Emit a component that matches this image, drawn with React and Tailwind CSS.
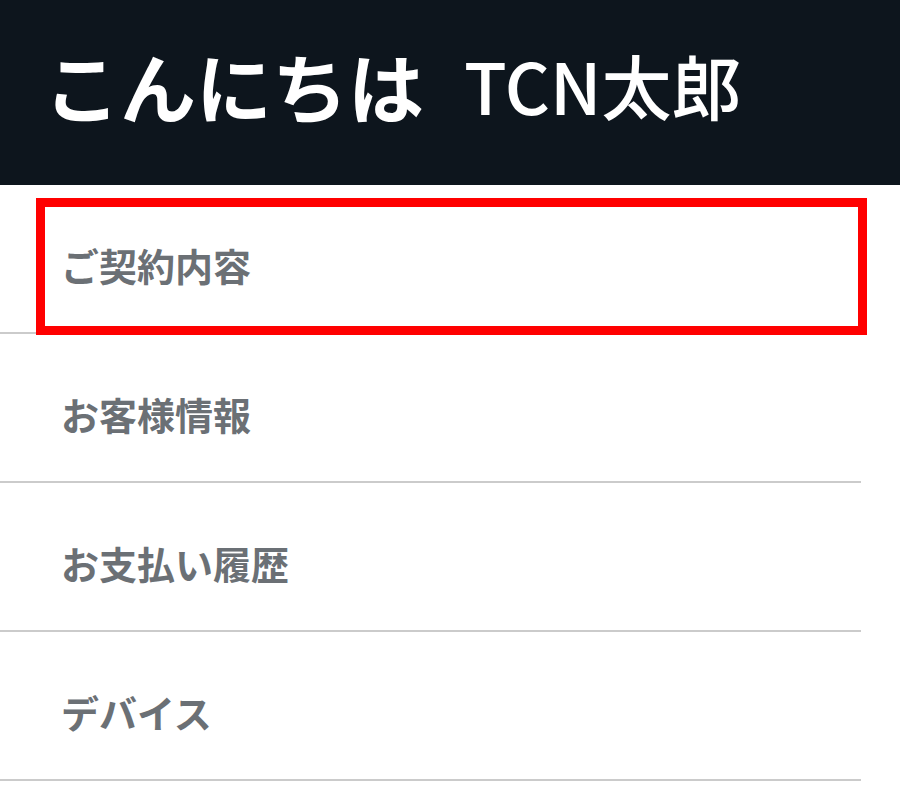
export default function App() {
  const items = ["ご契約内容", "お客様情報", "お支払い履歴", "デバイス"];
  return (
    <div
      className="relative w-[900px] h-[798px] bg-white overflow-hidden"
      style={{ fontFamily: '"Noto Sans CJK JP", "Noto Sans", sans-serif' }}
    >
      <header className="h-[185px] bg-[#0d151d] flex items-center pl-[44px] pb-[16px]">
        <h1 className="text-white font-bold text-[76px] leading-none">こんにちは</h1>
        <span className="ml-[40px] text-white font-medium text-[70px] leading-none">TCN太郎</span>
      </header>
      <ul className="w-[861px]">
        {items.map((t) => (
          <li
            key={t}
            className="h-[149px] border-b-2 border-[#cbcbcb] flex items-center pl-[61px] pt-[12px]"
          >
            <span className="text-[#6b7075] font-bold text-[38px] leading-none">{t}</span>
          </li>
        ))}
      </ul>
      <div className="absolute left-[36px] top-[198px] w-[831px] h-[137px] border-[9px] border-[#ff0000] pointer-events-none" />
    </div>
  );
}
